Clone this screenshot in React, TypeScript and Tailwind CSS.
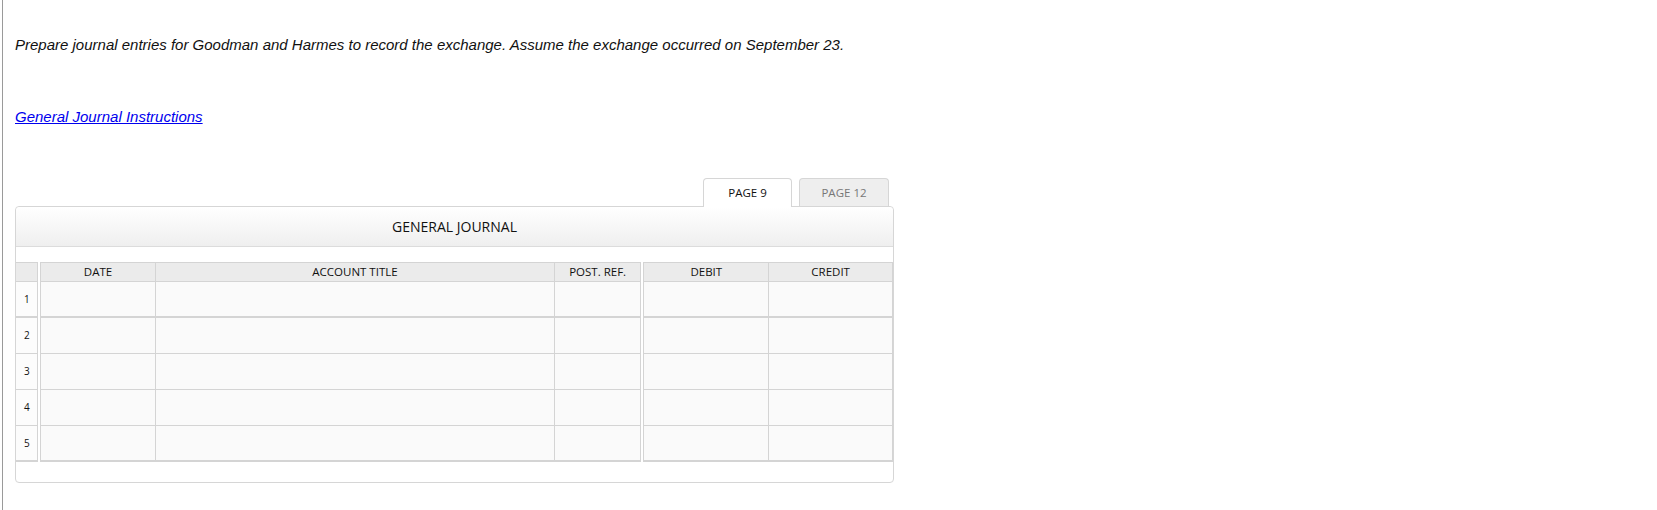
import React from "react";

const rows = [1, 2, 3, 4, 5];

export default function App() {
  const hdr = "h-[19px] bg-[#ebebeb] border-b border-[#d4d4d4] flex items-center justify-center text-[11.5px] text-[#111]";
  return (
    <div className="w-[1657px] h-[510px] bg-white flex">
      <div className="w-[2px] shrink-0" />
      <div className="w-px bg-[#9a9a9a] shrink-0" />
      <div className="flex-1 pl-[12px] pt-[36px]">
        <p className="text-[15px] leading-[17px] italic text-[#111]" style={{ fontFamily: "Arial, 'Liberation Sans', sans-serif" }}>
          Prepare journal entries for Goodman and Harmes to record the exchange. Assume the exchange occurred on September 23.
        </p>
        <div className="mt-[51px] h-[17px]">
          <a
            href="#"
            className="text-[15px] leading-[17px] italic text-[#0000ee] underline"
            style={{ fontFamily: "Arial, 'Liberation Sans', sans-serif" }}
          >
            General Journal Instructions
          </a>
        </div>
        <div className="mt-[57px] w-[879px]" style={{ fontFamily: "'Open Sans', 'Noto Sans', sans-serif" }}>
          <div className="flex justify-end pr-[5px] gap-[7px] h-[28px]">
            <div className="w-[89px] h-[29px] border border-b-0 border-[#d6d6d6] rounded-t-[4px] bg-white flex items-center justify-center text-[11.5px] text-[#111] relative z-10">
              PAGE 9
            </div>
            <div className="w-[90px] h-[28px] border border-b-0 border-[#d6d6d6] rounded-t-[4px] bg-[#eeeeee] flex items-center justify-center text-[11.5px] text-[#777]">
              PAGE 12
            </div>
          </div>
          <div className="border border-[#d6d6d6] rounded-[4px] bg-white h-[277px] flex flex-col">
            <div className="h-[40px] border-b border-[#dcdcdc] rounded-t-[4px] bg-gradient-to-b from-white to-[#efefef] flex items-center justify-center text-[14px] text-[#111]">
              GENERAL JOURNAL
            </div>
            <div className="h-[15px]" />
            <div className="flex">
              <div className="w-[22px] border-r border-[#d4d4d4] border-t">
                <div className={hdr} />
                {rows.map((r) => (
                  <div
                    key={r}
                    className={`h-[36px] bg-[#fcfcfc] flex items-center pl-[8px] text-[10px] text-[#111] border-[#d4d4d4] ${r === 1 || r === 5 ? "border-b-2" : "border-b"}`}
                  >
                    {r}
                  </div>
                ))}
              </div>
              <div className="w-[2px]" />
              <div className="w-[602px] border-l border-r border-t border-[#d4d4d4] flex">
                {[
                  { t: "DATE", w: "w-[115px]" },
                  { t: "ACCOUNT TITLE", w: "w-[399px]" },
                  { t: "POST. REF.", w: "flex-1" },
                ].map((c, i) => (
                  <div key={c.t} className={`${c.w} ${i < 2 ? "border-r border-[#d4d4d4]" : ""}`}>
                    <div className={hdr}>{c.t}</div>
                    {rows.map((r) => (
                      <div key={r} className={`h-[36px] bg-[#fafafa] border-[#d4d4d4] ${r === 1 || r === 5 ? "border-b-2" : "border-b"}`} />
                    ))}
                  </div>
                ))}
              </div>
              <div className="w-[2px]" />
              <div className="w-[250px] border-l border-r border-t border-[#d4d4d4] flex">
                {[
                  { t: "DEBIT", w: "w-[125px]" },
                  { t: "CREDIT", w: "flex-1" },
                ].map((c, i) => (
                  <div key={c.t} className={`${c.w} ${i < 1 ? "border-r border-[#d4d4d4]" : ""}`}>
                    <div className={hdr}>{c.t}</div>
                    {rows.map((r) => (
                      <div key={r} className={`h-[36px] bg-[#fafafa] border-[#d4d4d4] ${r === 1 || r === 5 ? "border-b-2" : "border-b"}`} />
                    ))}
                  </div>
                ))}
              </div>
            </div>
          </div>
        </div>
      </div>
    </div>
  );
}
